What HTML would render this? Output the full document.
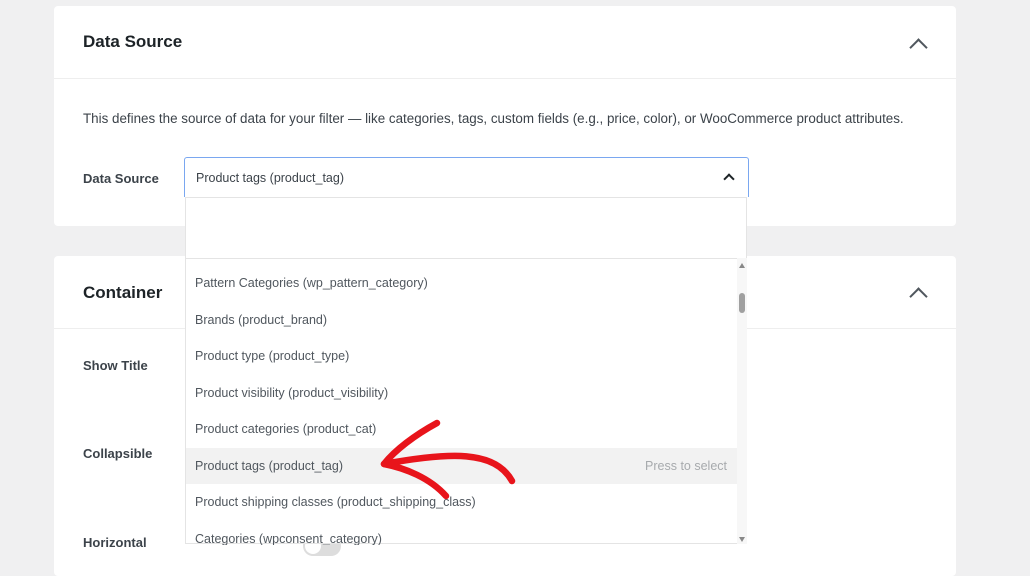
<!DOCTYPE html>
<html><head><style>
body{margin:0;width:1030px;height:569px;background:#f0f0f1;font-family:"Liberation Sans",sans-serif;position:relative;overflow:hidden}
.card{position:absolute;left:54px;width:902px;background:#fff;border-radius:4px}
.t{position:absolute;left:29px;font-size:17px;font-weight:bold;color:#1d2327}
.lbl{position:absolute;left:83px;font-size:13px;font-weight:bold;color:#3c434a}
.chev{position:absolute;width:11px;height:11px;border-left:2.5px solid #50575e;border-top:2.5px solid #50575e;transform:rotate(45deg)}
.row{position:absolute;left:0;width:551px;height:36.5px;line-height:36.5px;padding-left:9px;font-size:12.5px;color:#50575e;box-sizing:border-box}
</style></head><body>
<div class="card" style="top:6px;height:220px">
<div class="t" style="top:26px">Data Source</div>
<div style="position:absolute;left:0;right:0;top:72px;border-top:1px solid #eee"></div>
<div class="chev" style="left:858px;top:35px"></div>
<div style="position:absolute;left:29px;top:105px;font-size:13.4px;color:#3c434a">This defines the source of data for your filter — like categories, tags, custom fields (e.g., price, color), or WooCommerce product attributes.</div>
</div>
<div class="lbl" style="top:171px">Data Source</div>
<div class="card" style="top:256px;height:320px">
<div class="t" style="top:27px">Container</div>
<div style="position:absolute;left:0;right:0;top:72px;border-top:1px solid #eee"></div>
<div class="chev" style="left:858px;top:34px"></div>
</div>
<div class="lbl" style="top:358px">Show Title</div>
<div class="lbl" style="top:446px">Collapsible</div>
<div class="lbl" style="top:535px">Horizontal</div>
<div style="position:absolute;left:303px;top:536px;width:38px;height:20px;border-radius:10px;background:#ddd"></div>
<div style="position:absolute;left:305px;top:538px;width:16px;height:16px;border-radius:8px;background:#fff"></div>
<div style="position:absolute;z-index:2;left:184px;top:157px;width:563px;height:39px;border:1px solid #7aa7f0;border-bottom:none;border-radius:3px 3px 0 0;background:#fff"></div>
<div style="position:absolute;z-index:3;left:196px;top:171px;font-size:12.5px;color:#3c434a">Product tags (product_tag)</div>
<div class="chev" style="z-index:3;left:725px;top:175px;width:6px;height:6px;border-width:2px;border-color:#1d2327"></div>
<div style="position:absolute;z-index:2;left:185px;top:197px;width:562px;height:347px;background:#fff;border:1px solid #e4e4e4;box-sizing:border-box">
<div style="position:absolute;left:0;right:0;top:60px;border-top:1px solid #e4e4e4"></div>
<div style="position:absolute;left:0;top:67px;width:551px;height:280px">
<div class="row" style="top:0">Pattern Categories (wp_pattern_category)</div>
<div class="row" style="top:36.5px">Brands (product_brand)</div>
<div class="row" style="top:73px">Product type (product_type)</div>
<div class="row" style="top:109.5px">Product visibility (product_visibility)</div>
<div class="row" style="top:146px">Product categories (product_cat)</div>
<div class="row" style="top:182.5px;background:#f2f2f2">Product tags (product_tag)<span style="position:absolute;right:10px;color:#a7aaad">Press to select</span></div>
<div class="row" style="top:219px">Product shipping classes (product_shipping_class)</div>
<div class="row" style="top:255.5px;height:24px;overflow:hidden">Categories (wpconsent_category)</div>
</div>
<div style="position:absolute;left:551px;top:60px;width:10px;height:286px;background:#f7f7f7"></div>
<div style="position:absolute;left:553px;top:65px;border:3px solid transparent;border-bottom:5px solid #888;border-top:none"></div>
<div style="position:absolute;left:553px;top:95px;width:6px;height:20px;border-radius:3px;background:#a0a0a0"></div>
<div style="position:absolute;left:553px;top:339px;border:3px solid transparent;border-top:5px solid #888;border-bottom:none"></div>
</div>
<svg style="position:absolute;left:0;top:0;z-index:4" width="1030" height="569"><g fill="none" stroke="#e8141b" stroke-width="6.5" stroke-linecap="round" stroke-linejoin="round"><path d="M512 481 C495 450 450 452 384 464"/><path d="M437 423 C415 435 395 450 384 464 C405 468 430 478 446 496"/></g></svg>
</body></html>
